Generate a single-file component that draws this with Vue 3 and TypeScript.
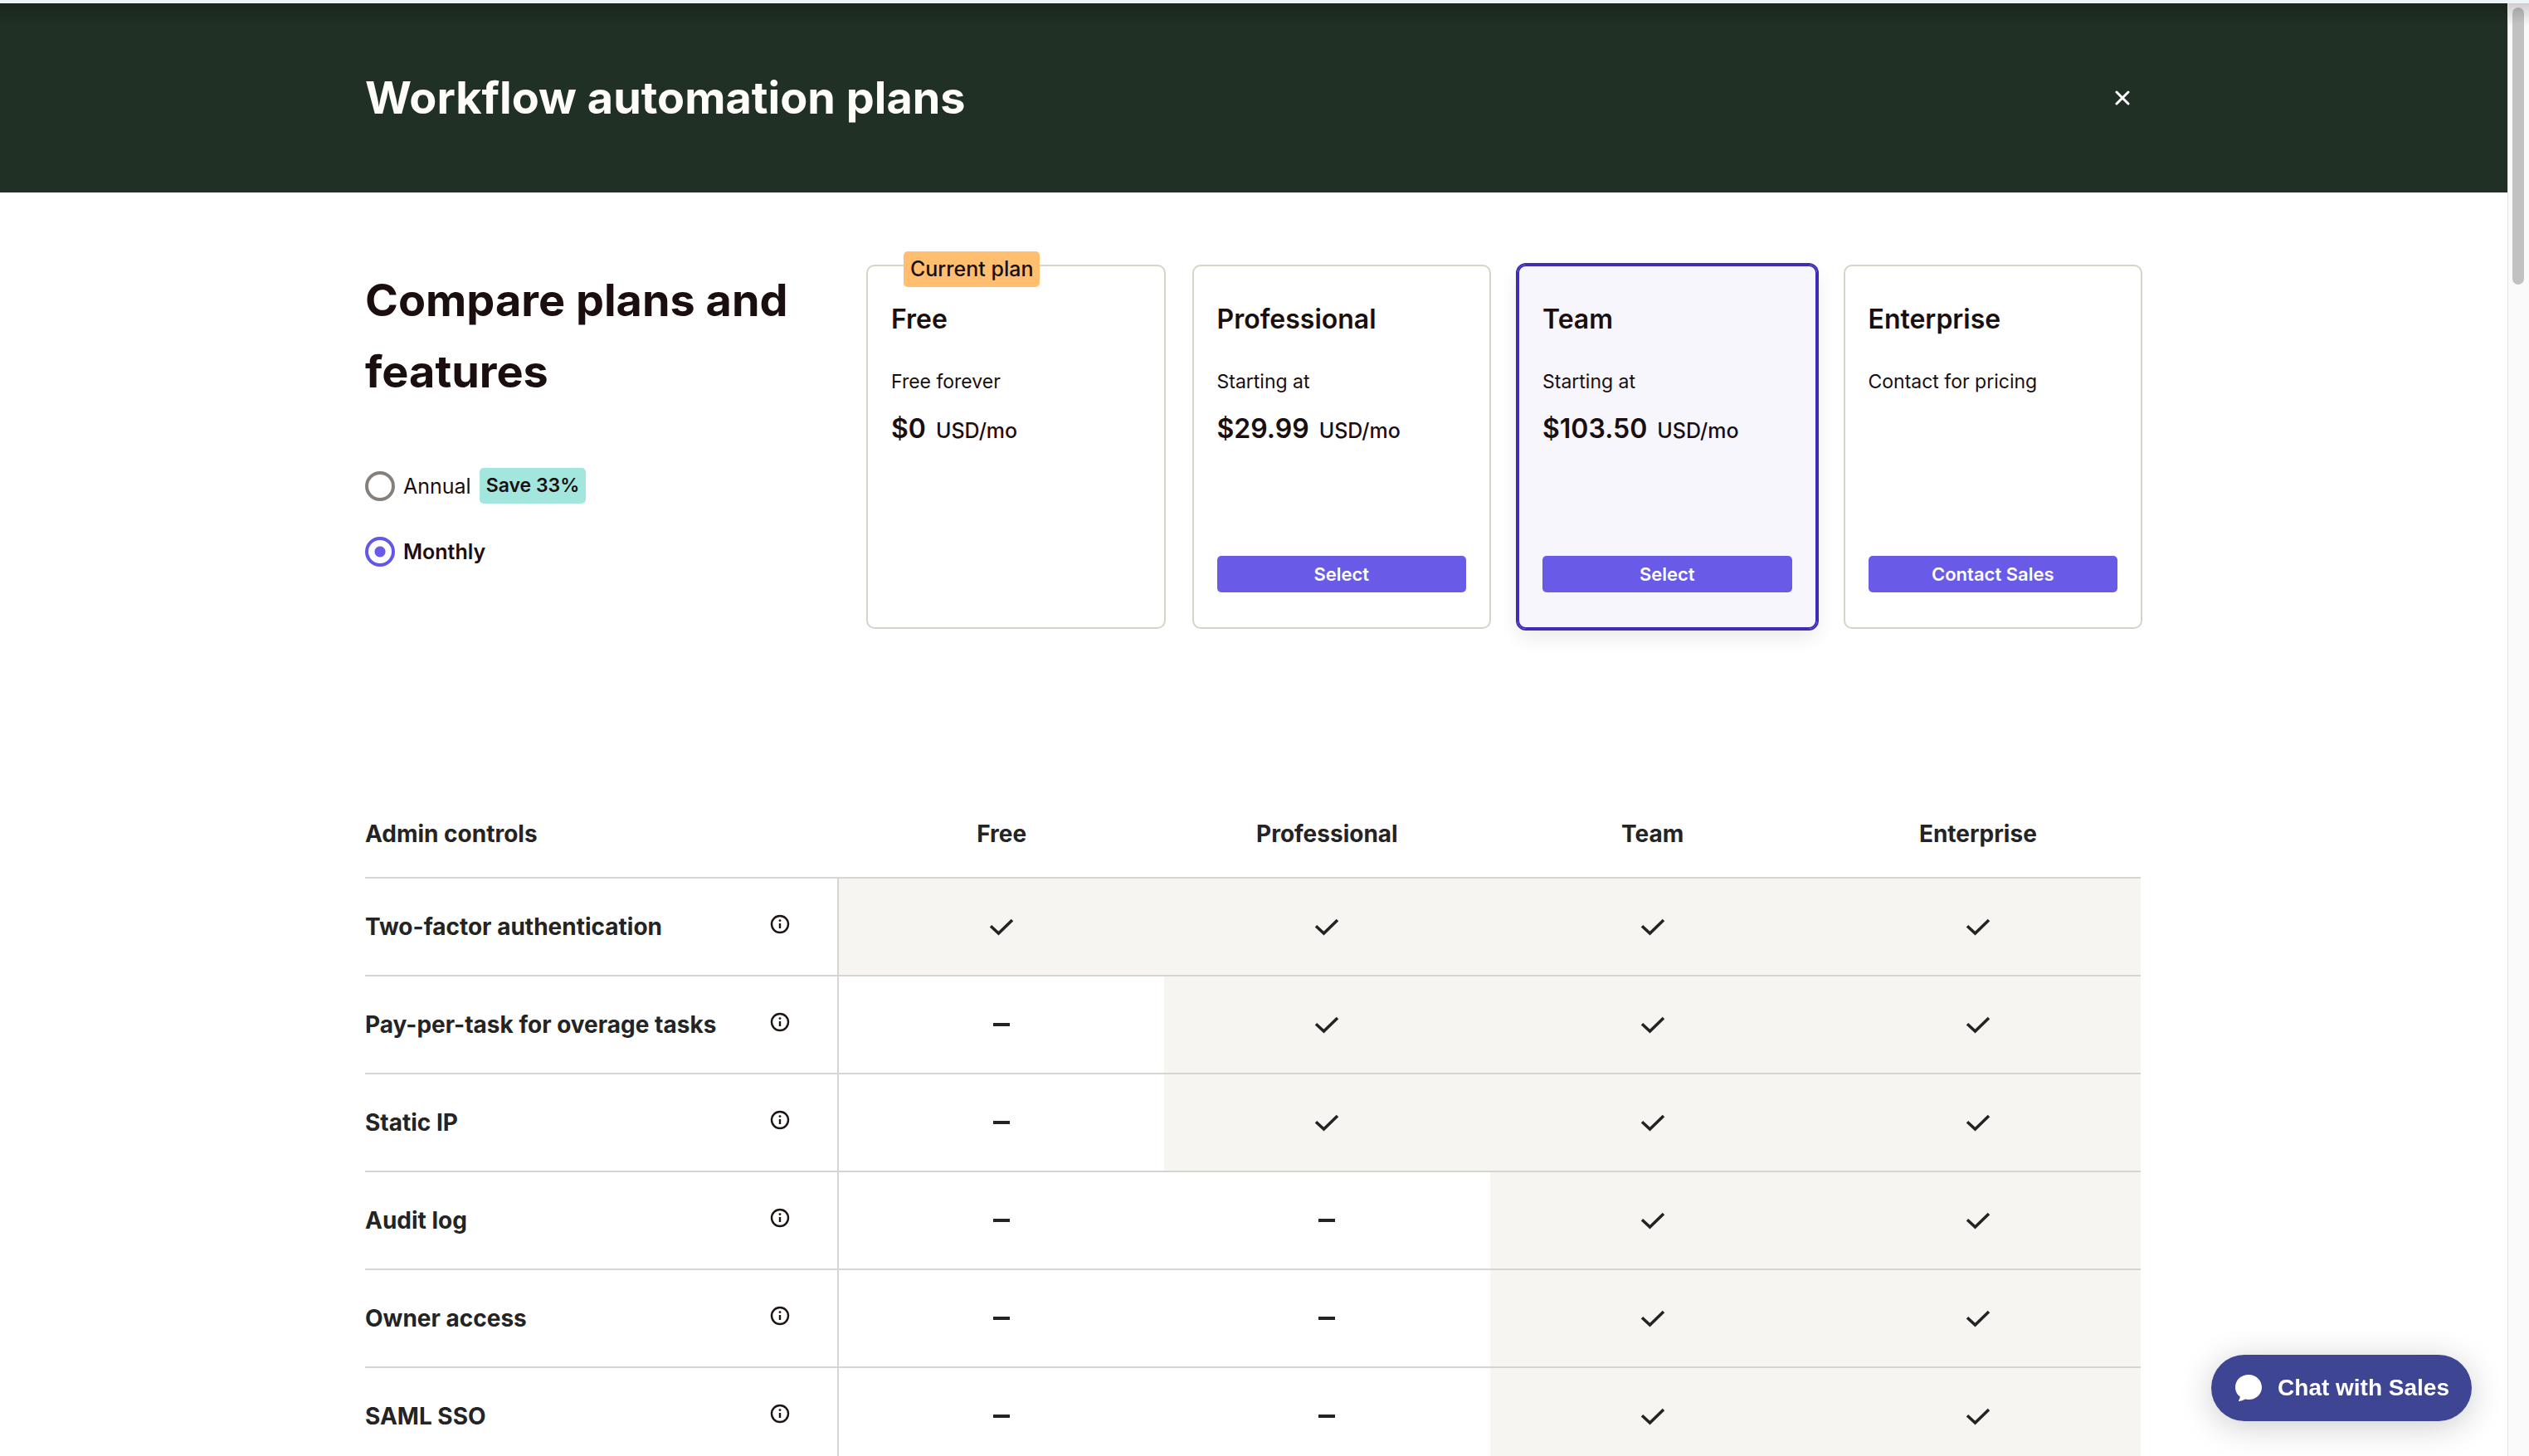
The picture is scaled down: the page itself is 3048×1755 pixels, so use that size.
<script setup lang="ts">
import { ref } from 'vue'

interface Plan {
  name: string
  note: string
  price?: string
  action?: string
  current?: boolean
  featured?: boolean
}

const plans: Plan[] = [
  { name: 'Free', note: 'Free forever', price: '$0', current: true },
  { name: 'Professional', note: 'Starting at', price: '$29.99', action: 'Select' },
  { name: 'Team', note: 'Starting at', price: '$103.50', action: 'Select', featured: true },
  { name: 'Enterprise', note: 'Contact for pricing', action: 'Contact Sales' },
]

// `from` is the index of the first plan that includes the feature.
const features: { name: string; from: number }[] = [
  { name: 'Two-factor authentication', from: 0 },
  { name: 'Pay-per-task for overage tasks', from: 1 },
  { name: 'Static IP', from: 1 },
  { name: 'Audit log', from: 2 },
  { name: 'Owner access', from: 2 },
  { name: 'SAML SSO', from: 2 },
]

const billing = ref<'annual' | 'monthly'>('monthly')
</script>

<template>
  <div class="window">
    <div class="page">
      <header class="banner">
        <div class="container banner-row">
          <h1 class="heading">Workflow automation plans</h1>
          <button class="close" type="button" aria-label="Close">
            <svg viewBox="0 0 18 18" width="18" height="18">
              <path d="M2 2 16 16M16 2 2 16" stroke="#fff" stroke-width="3" stroke-linecap="round" />
            </svg>
          </button>
        </div>
      </header>

      <main class="container">
        <section class="compare">
          <div class="intro">
            <h2 class="heading">Compare plans and features</h2>
            <div class="billing" role="radiogroup" aria-label="Billing period">
              <label class="option" :class="{ chosen: billing === 'annual' }">
                <input v-model="billing" type="radio" name="billing" value="annual" />
                <span>Annual</span>
                <span class="save">Save 33%</span>
              </label>
              <label class="option" :class="{ chosen: billing === 'monthly' }">
                <input v-model="billing" type="radio" name="billing" value="monthly" />
                <span>Monthly</span>
              </label>
            </div>
          </div>

          <div class="cards">
            <article v-for="plan in plans" :key="plan.name" class="card" :class="{ featured: plan.featured }">
              <span v-if="plan.current" class="current">Current plan</span>
              <h3>{{ plan.name }}</h3>
              <p class="note">{{ plan.note }}</p>
              <p v-if="plan.price" class="price">
                <strong>{{ plan.price }}</strong>
                <span>USD/mo</span>
              </p>
              <button v-if="plan.action" class="action" type="button">{{ plan.action }}</button>
            </article>
          </div>
        </section>

        <table class="features">
          <thead>
            <tr>
              <th class="label" scope="col">Admin controls</th>
              <th v-for="plan in plans" :key="plan.name" scope="col">{{ plan.name }}</th>
            </tr>
          </thead>
          <tbody>
            <tr v-for="feature in features" :key="feature.name">
              <th class="label" scope="row">
                <div class="feature">
                  <span>{{ feature.name }}</span>
                  <button class="info" type="button" :aria-label="`About ${feature.name}`">
                    <svg viewBox="0 0 24 24" width="24" height="24" fill="none">
                      <circle cx="12" cy="12" r="10" stroke="#1f1413" stroke-width="2.4" />
                      <path d="M12 11v6" stroke="#1f1413" stroke-width="2.4" />
                      <circle cx="12" cy="7.6" r="1.4" fill="#1f1413" />
                    </svg>
                  </button>
                </div>
              </th>
              <td v-for="(plan, index) in plans" :key="plan.name" :class="{ included: index >= feature.from }">
                <svg v-if="index >= feature.from" viewBox="0 0 30 22" width="30" height="22" fill="none" role="img" aria-label="Included">
                  <path d="M2 10.200 11.500 19 28 3" stroke="#232323" stroke-width="3.600" />
                </svg>
                <svg v-else viewBox="0 0 30 22" width="30" height="22" role="img" aria-label="Not included">
                  <rect x="5" y="9" width="20" height="4" fill="#232323" />
                </svg>
              </td>
            </tr>
          </tbody>
        </table>
      </main>
    </div>

    <div class="scrollbar" aria-hidden="true"><div class="thumb"></div></div>

    <button class="chat" type="button">
      <svg viewBox="0 0 32 32" width="32" height="32">
        <path
          d="M16 0C7 0 0 6.500 0 15.200c0 4.700 2.200 8.700 5.800 11.400-.2 1.600-.7 3-1.600 4.300-.4.600 0 1.100.7 1 2.600-.3 5-1.200 7-2.400 1.300.3 2.700.5 4.100.5 9 0 16-6.400 16-14.800S25 0 16 0Z"
          fill="#fff"
        />
      </svg>
      <span>Chat with Sales</span>
    </button>
  </div>
</template>

<style>
body {
  margin: 0;
  background: #fff;
}
</style>

<style scoped>
.window {
  display: grid;
  grid-template-columns: minmax(0, 1fr) 26px;
  height: 100vh;
  box-sizing: border-box;
  border-top: 4px solid #edf5f9;
  overflow: hidden;
  background: #fff;
  color: #1a0f0e;
  font-family: Inter, 'Liberation Sans', sans-serif;
}

button {
  margin: 0;
  padding: 0;
  border: 0;
  background: none;
  font-family: inherit;
  cursor: pointer;
}

svg {
  display: block;
}

h1,
h2,
h3,
p {
  margin: 0;
}

.page {
  overflow: hidden;
}

.container {
  max-width: 2142px;
  margin: 0 auto;
}

.banner {
  background: linear-gradient(#1a261c, #203024 28px);
  color: #fffdf9;
}

.banner-row {
  display: flex;
  align-items: center;
  justify-content: space-between;
  height: 228px;
}

.heading {
  font-size: 54px;
  line-height: 86px;
  font-weight: 700;
}

.close {
  padding: 15px;
}

.compare {
  display: flex;
  gap: 32px;
  margin-top: 87px;
}

.intro {
  flex: 1;
}

.billing {
  display: flex;
  flex-direction: column;
  gap: 36px;
  margin-top: 73px;
}

.option {
  display: flex;
  align-items: center;
  gap: 10px;
  height: 43px;
  font-size: 25px;
}

.option.chosen {
  font-weight: 600;
}

.option input {
  appearance: none;
  width: 36px;
  height: 36px;
  margin: 0;
  border: 4px solid #85807c;
  border-radius: 50%;
  background: #fff;
}

.option input:checked {
  border-color: #6257e6;
  background: radial-gradient(circle, #695be8 6px, #fff 7px);
}

.save,
.current {
  padding: 0 8px;
  border-radius: 5px;
  line-height: 43px;
}

.save {
  background: #a3e6dd;
  font-size: 23px;
  font-weight: 600;
}

.cards {
  display: grid;
  grid-template-columns: repeat(4, minmax(0, 1fr));
  gap: 32px;
  width: 1538px;
}

.card {
  position: relative;
  display: flex;
  flex-direction: column;
  box-sizing: border-box;
  min-height: 439px;
  padding: 44px 28px 42px;
  border: 2px solid #d7d3c9;
  border-radius: 10px;
}

.card.featured {
  border-color: #3f2cb5;
  outline: 2px solid #3f2cb5;
  background: #f7f6fd;
  box-shadow: 0 10px 24px rgba(0, 0, 0, 0.09);
}

.current {
  position: absolute;
  top: -18px;
  left: 43px;
  background: #ffbf6e;
  font-size: 25px;
  font-weight: 500;
}

.card h3 {
  font-size: 32px;
  line-height: 40px;
  font-weight: 600;
}

.note {
  margin-top: 39px;
  font-size: 23px;
  line-height: 32px;
}

.price {
  display: flex;
  align-items: baseline;
  gap: 12px;
  margin-top: 21px;
  line-height: 40px;
}

.price strong {
  font-size: 32px;
  font-weight: 600;
}

.price span {
  font-size: 25px;
  font-weight: 500;
}

.action {
  height: 44px;
  margin-top: auto;
  border-radius: 5px;
  background: #695be8;
  color: #fff;
  font-size: 22px;
  font-weight: 600;
}

.features {
  width: calc(100% - 2px);
  margin-top: 194px;
  border-collapse: separate;
  border-spacing: 0;
  table-layout: fixed;
  color: #242424;
  font-size: 28px;
}

.features th,
.features td {
  box-sizing: border-box;
  height: 118px;
  padding: 0;
  border-bottom: 2px solid #d6d5d1;
  font-weight: 700;
}

.features thead th {
  height: 107px;
}

.features .label {
  width: 571px;
  text-align: left;
}

.features tbody .label {
  border-right: 2px solid #d6d5d1;
}

.feature {
  display: flex;
  align-items: center;
  justify-content: space-between;
  padding-right: 57px;
}

.info {
  padding-bottom: 6px;
}

.features td svg {
  margin: 0 auto;
}

.included {
  background: #f6f5f1;
}

.scrollbar {
  box-sizing: border-box;
  padding: 5px 5px 0;
  border-left: 1px solid #e6e6e6;
  background: linear-gradient(#cfcfcf, #fafafa 28px);
}

.thumb {
  width: 14px;
  height: 334px;
  border-radius: 7px;
  background: linear-gradient(#a6a6a6, #c1c1c1 20px);
}

.chat {
  position: fixed;
  right: 69px;
  bottom: 42px;
  display: flex;
  align-items: center;
  gap: 19px;
  height: 80px;
  padding: 0 27px 0 29px;
  border-radius: 40px;
  background: #3e4592;
  box-shadow: 0 6px 40px rgba(0, 0, 0, 0.2);
  color: #fff;
  font-family: 'Liberation Sans', Arial, sans-serif;
  font-size: 28px;
  font-weight: 700;
}
</style>
